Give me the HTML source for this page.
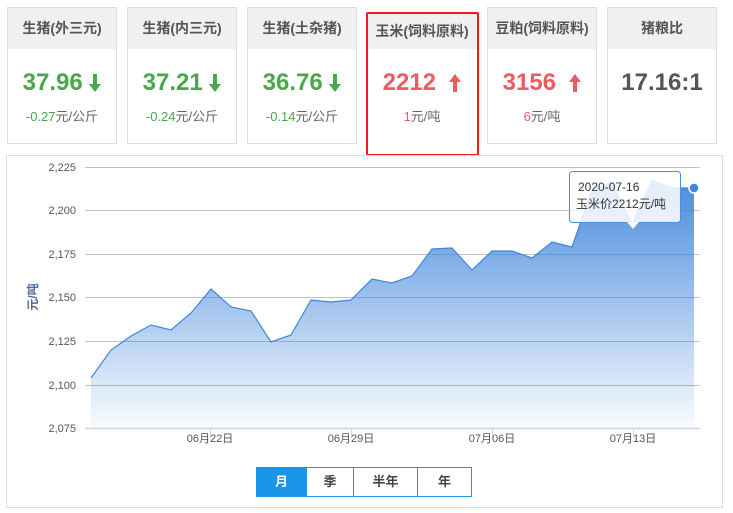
<!DOCTYPE html>
<html><head><meta charset="utf-8"><style>
*{margin:0;padding:0;box-sizing:border-box}
body{width:733px;height:513px;background:#fff;font-family:"Liberation Sans","Noto Sans CJK SC",sans-serif;position:relative;overflow:hidden}
.card{position:absolute;top:7px;width:110px;height:137px;border:1px solid #ddd;background:#fff;text-align:center}
.card .h{height:41px;background:#f0f0f0;line-height:41px;font-size:14px;font-weight:bold;color:#555}
.card .v{margin-top:19px;font-size:24px;font-weight:bold;line-height:30px}
.card .v svg{vertical-align:-2px}
.card .s{margin-top:8px;font-size:13px;color:#666}
.g{color:#48a84a}.r{color:#f25a62}
.red{position:absolute;left:366px;top:12px;width:113px;height:144px;border:2px solid #f0191e;border-radius:2px}
.panel{position:absolute;left:6px;top:155px;width:717px;height:353px;border:1px solid #ddd}
.btns{position:absolute;left:256px;top:467px;height:30px;display:flex;border:1px solid #1a96e8}
.btns div{height:28px;line-height:28px;text-align:center;font-size:13px;font-weight:bold;color:#444;border-left:1px solid #1a96e8}
</style></head><body>
<div class="card" style="left:7px"><div class="h">生猪(外三元)</div><div class="v g">37.96 <svg width="12" height="18" viewBox="0 0 12 18"><path d="M4,0H8V10H12L6,18L0,10H4Z" fill="#48a84a"/></svg></div><div class="s"><span class="g">-0.27</span>元/公斤</div></div>
<div class="card" style="left:127px"><div class="h">生猪(内三元)</div><div class="v g">37.21 <svg width="12" height="18" viewBox="0 0 12 18"><path d="M4,0H8V10H12L6,18L0,10H4Z" fill="#48a84a"/></svg></div><div class="s"><span class="g">-0.24</span>元/公斤</div></div>
<div class="card" style="left:247px"><div class="h">生猪(土杂猪)</div><div class="v g">36.76 <svg width="12" height="18" viewBox="0 0 12 18"><path d="M4,0H8V10H12L6,18L0,10H4Z" fill="#48a84a"/></svg></div><div class="s"><span class="g">-0.14</span>元/公斤</div></div>
<div class="card" style="left:367px;border:none"><div class="h" style="margin-top:7px;height:35px;line-height:35px">玉米(饲料原料)</div><div class="v r">2212 &nbsp;<svg width="12" height="18" viewBox="0 0 12 18"><path d="M4,18H8V8H12L6,0L0,8H4Z" fill="#f25a62"/></svg></div><div class="s"><span class="r">1</span>元/吨</div></div>
<div class="red"></div>
<div class="card" style="left:487px"><div class="h">豆粕(饲料原料)</div><div class="v r">3156 &nbsp;<svg width="12" height="18" viewBox="0 0 12 18"><path d="M4,18H8V8H12L6,0L0,8H4Z" fill="#f25a62"/></svg></div><div class="s"><span class="r">6</span>元/吨</div></div>
<div class="card" style="left:607px"><div class="h">猪粮比</div><div class="v" style="color:#555">17.16:1</div></div>
<div class="panel"></div>
<svg style="position:absolute;left:0;top:0" width="733" height="513">
<defs><linearGradient id="gr" x1="0" y1="0" x2="0" y2="1"><stop offset="0" stop-color="#3f86db" stop-opacity="0.95"/><stop offset="1" stop-color="#3f86db" stop-opacity="0.03"/></linearGradient></defs>
<g stroke="#c0c0c0" stroke-width="1">
<line x1="85" x2="700" y1="167.5" y2="167.5"/><line x1="85" x2="700" y1="210.5" y2="210.5"/><line x1="85" x2="700" y1="254.5" y2="254.5"/><line x1="85" x2="700" y1="297.5" y2="297.5"/><line x1="85" x2="700" y1="341.5" y2="341.5"/><line x1="85" x2="700" y1="385.5" y2="385.5"/></g>
<polygon fill="url(#gr)" points="91,428 91,378 111,350 131,336 151,325 171,330 191,313 211,289 231,307 251,311 271,342 291,335 311,300 331,302 351,300 372,279 392,283 412,276 432,249 452,248 472,270 492,251 512,251 532,258 552,242 572,247 592,190 612,182 632,225 652,180 672,188 694,188 694,428"/>
<polyline fill="none" stroke="#3f86db" stroke-width="1.2" points="91,378 111,350 131,336 151,325 171,330 191,313 211,289 231,307 251,311 271,342 291,335 311,300 331,302 351,300 372,279 392,283 412,276 432,249 452,248 472,270 492,251 512,251 532,258 552,242 572,247 592,190 612,182 632,225 652,180 672,188 694,188"/>
<line x1="85" x2="700" y1="428.5" y2="428.5" stroke="#ccd6eb" stroke-width="1.5"/>
<g stroke="#ccd6eb"><line x1="210.5" x2="210.5" y1="428" y2="438"/><line x1="351.5" x2="351.5" y1="428" y2="438"/><line x1="492.5" x2="492.5" y1="428" y2="438"/><line x1="633.5" x2="633.5" y1="428" y2="438"/></g>
<g font-size="11" fill="#555" text-anchor="end" font-family="Liberation Sans,sans-serif">
<text x="76" y="171">2,225</text><text x="76" y="214">2,200</text><text x="76" y="258">2,175</text><text x="76" y="301">2,150</text><text x="76" y="345">2,125</text><text x="76" y="389">2,100</text><text x="76" y="432">2,075</text></g>
<g font-size="11" fill="#555" text-anchor="middle" font-family="Liberation Sans,Noto Sans CJK SC,sans-serif">
<text x="210" y="442">06月22日</text><text x="351" y="442">06月29日</text><text x="492" y="442">07月06日</text><text x="633" y="442">07月13日</text></g>
<text transform="translate(37,297) rotate(-90)" text-anchor="middle" font-size="12" fill="#4a6a99" font-weight="bold" font-family="Liberation Sans,Noto Sans CJK SC,sans-serif">元/吨</text>
<circle cx="694" cy="188" r="5" fill="#3f86db" stroke="#fff" stroke-width="1.5"/>
<rect x="569.5" y="171.5" width="111" height="51" rx="3" fill="#fff" fill-opacity="0.85" stroke="#4a8fdc"/>
<path d="M627,222 L633,229 L639,222" fill="#fff" stroke="none"/>
<text x="578" y="191" font-size="12" fill="#333" font-family="Liberation Sans,Noto Sans CJK SC,sans-serif">2020-07-16</text>
<text x="576" y="208" font-size="12" fill="#333" font-family="Liberation Sans,Noto Sans CJK SC,sans-serif">玉米价2212元/吨</text>
</svg>
<div class="btns"><div style="width:49px;background:#1a96e8;color:#fff;border-left:none">月</div><div style="width:47px">季</div><div style="width:64px">半年</div><div style="width:54px">年</div></div>
</body></html>
